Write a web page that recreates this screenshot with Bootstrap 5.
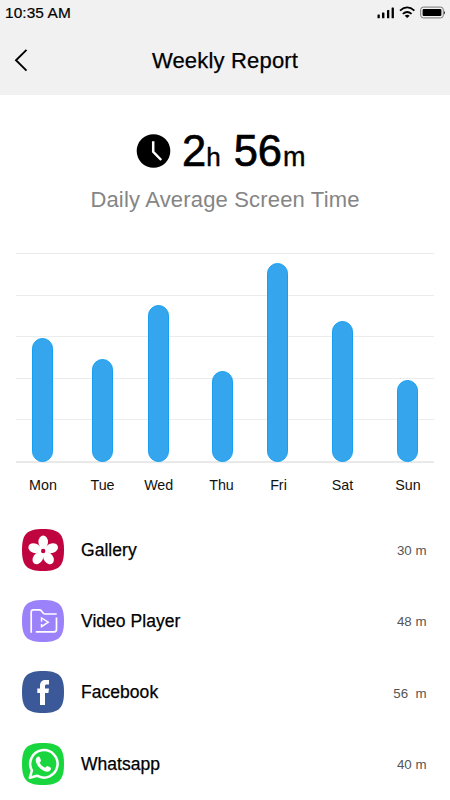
<!DOCTYPE html>
<html lang="en">
<head>
<meta charset="utf-8">
<meta name="viewport" content="width=device-width, initial-scale=1">
<title>Weekly Report</title>
<link href="https://cdn.jsdelivr.net/npm/bootstrap@5.3.0/dist/css/bootstrap.min.css" rel="stylesheet">
<style>
body{font-family:"Liberation Sans",Arial,sans-serif;color:#000;width:450px;height:800px;overflow:hidden}
.top-area{background:#f1f1f1;height:95px}
.status-row{height:25px;padding:0 4px 0 5px}
.clock-text{font-size:15.4px;line-height:25px;letter-spacing:.1px;-webkit-text-stroke:.2px #000}
.title-row{height:70px;display:grid;grid-template-columns:45px 1fr 45px}
.page-title{font-size:22px;letter-spacing:.18px;line-height:25px;-webkit-text-stroke:.25px #000}
.summary{height:158px;padding-top:32px}
.total{height:48px;line-height:48px;padding-left:136px}
.total svg{margin-top:6px}
.num{font-size:43.5px;-webkit-text-stroke:.7px #000}
.unit{font-size:26px;-webkit-text-stroke:.4px #000}
.num.ps-1{padding-left:3px!important}
.minutes{margin-left:10px}
.minutes + .unit{font-size:27px;margin-left:1px}
.caption{font-size:22px;line-height:26px;letter-spacing:.17px;color:#858585;margin-top:12px}
.chart{height:209px;margin:0 16px 1px;display:grid}
.chart>*{grid-area:1/1}
.lines{display:flex;flex-direction:column;justify-content:space-between}
.lines i{height:1px;background:#ececec}
.lines i:last-child{height:2px;margin-bottom:-1px;background:#e9e9e9}
.bars{display:grid;grid-template-columns:52.2px 68.6px 44px 83.4px 27.6px 101px 30.4px;align-items:end;justify-items:center;padding-bottom:.3px}
.bar{width:21px;border-radius:10.5px;background:#35a5ee;border:1px solid #149ff0}
.days{display:grid;grid-template-columns:54px 65px 47.4px 78.2px 35.8px 92.2px 38.8px;margin:0 16px;height:51px;padding-top:12px;font-size:14.3px;line-height:20px;color:#111;text-align:center}
.app-row{height:71.4px;padding:0 23.5px 0 22px}
.app-row svg{flex:none}
.app-name{font-size:17.5px;line-height:22px;letter-spacing:.04px;margin-left:17px;-webkit-text-stroke:.25px #000}
.app-time{font-size:13.3px;color:#555;padding-top:2px;white-space:pre}
</style>
<script src="https://cdn.jsdelivr.net/npm/bootstrap@5.3.0/dist/js/bootstrap.bundle.min.js"></script>
</head>
<body class="bg-white">
<header class="top-area">
  <div class="status-row d-flex justify-content-between align-items-center">
    <span class="clock-text">10:35 AM</span>
    <svg width="70" height="14" viewBox="376 5.600 70 14">
      <g fill="#000"><rect x="377.5" y="14.2" width="2.3" height="3.6" rx=".5"/><rect x="382" y="12" width="2.4" height="5.8" rx=".5"/><rect x="387" y="9.5" width="2.3" height="8.3" rx=".5"/><rect x="391.6" y="7" width="2.3" height="10.8" rx=".5"/></g>
      <g fill="none" stroke="#000" stroke-width="1.8"><path d="M400 10.2Q407.2 3.800 414.400 10.200"/><path d="M402.800 13.500Q407.200 9.600 411.600 13.500"/></g>
      <path d="M404.700 15.300Q407.200 13.600 409.700 15.300L407.200 17.500Z"/>
      <rect x="420.700" y="6.700" width="22.600" height="10.800" rx="2.600" fill="none" stroke="#777"/>
      <rect x="422.600" y="8.600" width="18.800" height="7" rx="1"/>
      <path d="M444.100 10q1.600 2 0 4z"/>
    </svg>
  </div>
  <div class="title-row align-items-center">
    <svg width="28" height="28" viewBox="0 46 28 28"><path d="M26.500 49.800L16 60.300L26.500 70.600" fill="none" stroke="#000" stroke-width="1.900"/></svg>
    <h1 class="page-title fw-normal text-center m-0">Weekly Report</h1>
  </div>
</header>
<main>
  <section class="summary">
    <div class="total d-flex">
      <svg width="35" height="36" viewBox="0 0 35 36"><circle cx="17.500" cy="18" r="16.800"/><path d="M17.200 8.200V18.800L25.200 27" fill="none" stroke="#fff" stroke-width="2.500"/></svg>
      <div class="d-flex align-items-baseline ms-2"><span class="num ps-1">2</span><span class="unit">h</span><span class="num minutes ps-1">56</span><span class="unit">m</span></div>
    </div>
    <p class="caption text-center mb-0">Daily Average Screen Time</p>
  </section>
  <section>
    <div class="chart">
      <div class="lines"><i></i><i></i><i></i><i></i><i></i><i></i></div>
      <div class="bars">
        <div class="bar" style="height:123.700px"></div>
        <div class="bar" style="height:102.700px"></div>
        <div class="bar" style="height:157px"></div>
        <div class="bar" style="height:90.300px"></div>
        <div class="bar" style="height:198.700px"></div>
        <div class="bar" style="height:140.500px"></div>
        <div class="bar" style="height:82px"></div>
      </div>
    </div>
    <div class="days"><span>Mon</span><span>Tue</span><span>Wed</span><span>Thu</span><span>Fri</span><span>Sat</span><span>Sun</span></div>
  </section>
  <section class="apps">
    <div class="app-row d-flex align-items-center">
      <svg width="42" height="42" viewBox="0 0 42 42"><path d="M21 0C37 0 42 5 42 21S37 42 21 42 0 37 0 21 5 0 21 0Z" fill="#c0043f"/>
        <g fill="#fff" transform="translate(21.200 22)"><ellipse cy="-9" rx="4.800" ry="6.400"/><ellipse cy="-9" rx="4.800" ry="6.400" transform="rotate(72)"/><ellipse cy="-9" rx="4.800" ry="6.400" transform="rotate(144)"/><ellipse cy="-9" rx="4.800" ry="6.400" transform="rotate(216)"/><ellipse cy="-9" rx="4.800" ry="6.400" transform="rotate(288)"/><circle r="5.500"/><circle r="2.200" fill="#c0043f"/></g></svg>
      <span class="app-name flex-grow-1">Gallery</span><span class="app-time">30 m</span>
    </div>
    <div class="app-row d-flex align-items-center">
      <svg width="42" height="42" viewBox="0 0 42 42"><path d="M21 0C37 0 42 5 42 21S37 42 21 42 0 37 0 21 5 0 21 0Z" fill="#9b82fb"/>
        <g fill="none" stroke="#fff" stroke-width="1.700"><path d="M9.200 32.800V12Q9.200 9.800 11.400 9.800H17.500Q18.600 9.800 19.300 10.700L21.300 13.200Q22 14 23.200 14H34.700"/><path d="M34.500 17.500V29.500Q34.500 31.800 32.200 31.800H13.800"/><path d="M19.500 21.700V18L26.300 22.200L19.500 26.600V24" stroke-width="1.400"/></g></svg>
      <span class="app-name flex-grow-1">Video Player</span><span class="app-time">48 m</span>
    </div>
    <div class="app-row d-flex align-items-center">
      <svg width="42" height="42" viewBox="0 0 42 42"><path d="M21 0C37 0 42 5 42 21S37 42 21 42 0 37 0 21 5 0 21 0Z" fill="#3b5998"/>
        <path d="M18 34V22H15.300V17.600H18V14.800C18 11 20.100 9 23.600 9H27V13.400H24.800C23.500 13.400 23 14 23 15.200V17.600H27L26.400 22H23V34Z" fill="#fff"/></svg>
      <span class="app-name flex-grow-1">Facebook</span><span class="app-time">56  m</span>
    </div>
    <div class="app-row d-flex align-items-center">
      <svg width="42" height="42" viewBox="0 0 42 42"><path d="M21 0C37 0 42 5 42 21S37 42 21 42 0 37 0 21 5 0 21 0Z" fill="#19d63e"/>
        <path d="M7.800 34.800L9.900 27.500A13.700 13.700 0 1 1 15 32.700Z" fill="none" stroke="#fff" stroke-width="2.500" stroke-linejoin="round"/>
        <path d="M16.200 13.500C16.900 13.400 17.400 13.600 17.700 14.300L18.900 17.100C19.200 17.900 18.200 18.900 17.600 19.500C18.800 22 20.600 23.700 23.200 24.800C24 24 24.700 22.700 25.500 23L28.500 24.500C29.600 25.200 28.700 27.500 27.300 28.200C24.800 29.500 21.300 28 18.300 25.400C15.600 23 13.800 19.800 13.700 17.500C13.700 15.500 15 13.700 16.200 13.500Z" fill="#fff"/></svg>
      <span class="app-name flex-grow-1">Whatsapp</span><span class="app-time">40 m</span>
    </div>
  </section>
</main>
</body>
</html>
